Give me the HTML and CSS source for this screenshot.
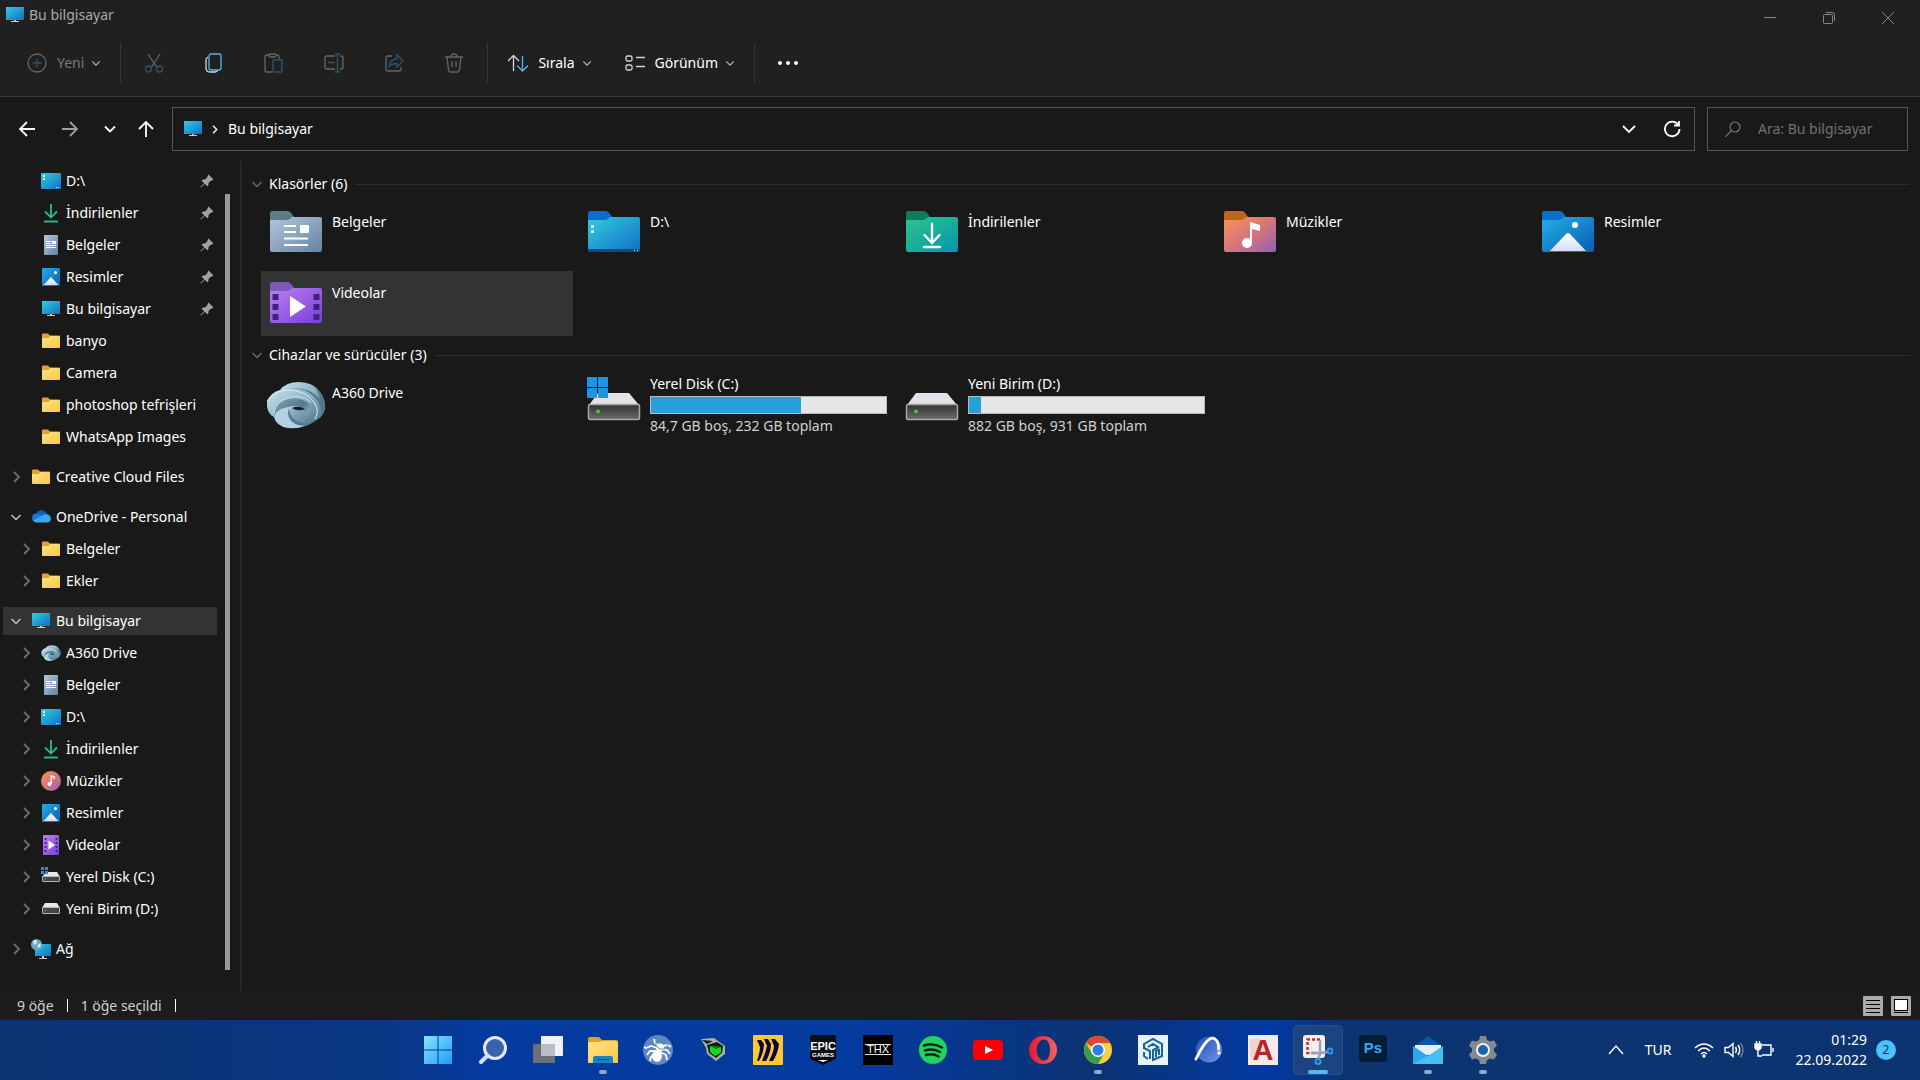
FILE: index.html
```html
<!DOCTYPE html>
<html lang="tr">
<head>
    <meta charset="UTF-8">
    <meta name="viewport" content="width=device-width, initial-scale=1.0">
    <title>Bu bilgisayar</title>
    <link rel="stylesheet" href="styles.css">
</head>
<body>
    <!-- Simgeler -->
    <svg class="sprite" aria-hidden="true">
        <defs>
            <linearGradient id="g-screen" x1="0" y1="0" x2="1" y2="1"><stop offset="0" stop-color="#35cbe0"/><stop offset="1" stop-color="#0f70c4"/></linearGradient>
            <linearGradient id="g-folder" x1="0" y1="0" x2="1" y2="1"><stop offset="0" stop-color="#ffe38d"/><stop offset="1" stop-color="#fbc740"/></linearGradient>
            <linearGradient id="g-doc" x1="0" y1="0" x2="1" y2="1"><stop offset="0" stop-color="#b4c6dc"/><stop offset="1" stop-color="#6484a4"/></linearGradient>
            <linearGradient id="g-down" x1="0" y1="0" x2="1" y2="1"><stop offset="0" stop-color="#2fc58a"/><stop offset="1" stop-color="#0594ad"/></linearGradient>
            <linearGradient id="g-music" x1="0" y1="0" x2="1" y2="1"><stop offset="0" stop-color="#fb9355"/><stop offset=".55" stop-color="#d2737d"/><stop offset="1" stop-color="#8d63bd"/></linearGradient>
            <linearGradient id="g-pic" x1="0" y1="0" x2="1" y2="1"><stop offset="0" stop-color="#25afe8"/><stop offset="1" stop-color="#0a5cb4"/></linearGradient>
            <linearGradient id="g-video" x1="0" y1="0" x2="1" y2="1"><stop offset="0" stop-color="#b883f0"/><stop offset="1" stop-color="#7a3cd8"/></linearGradient>
            <linearGradient id="g-hill" x1="0" y1="0" x2="0" y2="1"><stop offset="0" stop-color="#ffffff"/><stop offset="1" stop-color="#cfdff8"/></linearGradient>
            <linearGradient id="g-disk" x1="0" y1="0" x2="0" y2="1"><stop offset="0" stop-color="#333333"/><stop offset="1" stop-color="#6b6b6b"/></linearGradient>
            <linearGradient id="g-swirl" x1="0" y1="0" x2="1" y2="1"><stop offset="0" stop-color="#d3eff6"/><stop offset=".5" stop-color="#8db4c6"/><stop offset="1" stop-color="#41657a"/></linearGradient>
            <linearGradient id="g-swirl2" x1="0" y1="0" x2="1" y2="1"><stop offset="0" stop-color="#82a5b8"/><stop offset=".5" stop-color="#55788d"/><stop offset="1" stop-color="#b5d6e4"/></linearGradient>
            <linearGradient id="g-win" x1="0" y1="0" x2="1" y2="1"><stop offset="0" stop-color="#8be3fd"/><stop offset="1" stop-color="#1aa0f8"/></linearGradient>
            <linearGradient id="g-opera" x1="0" y1="0" x2="1" y2="0"><stop offset="0" stop-color="#e21b36"/><stop offset="1" stop-color="#f3615f"/></linearGradient>
            <linearGradient id="g-arc" x1="0" y1="0" x2="1" y2="1"><stop offset="0" stop-color="#274fae"/><stop offset="1" stop-color="#6f92ee"/></linearGradient>
        </defs>

        <symbol id="i-pc" viewBox="0 0 20 20"><path d="M1 2h18v13H1z" fill="url(#g-screen)"/><path d="M9 15h2v1h3v1H6v-1h3z" fill="#c3ccd2"/></symbol>
        <symbol id="i-desk" viewBox="0 0 20 20"><rect y="2" width="20" height="16" rx="1" fill="url(#g-screen)"/><path d="M2 4h2v2H2zM2 7h2v2H2zM15 16h1v1h-1zM17 16h1v1h-1z" fill="#d9f8ff"/></symbol>
        <symbol id="i-down" viewBox="0 0 20 20"><path d="M10 1v13M4 8.500l6 6 6-6M3 18.500h14" fill="none" stroke="#2db48a" stroke-width="1.900"/></symbol>
        <symbol id="i-doc" viewBox="0 0 20 20"><rect x="3" width="14" height="20" rx="1" fill="url(#g-doc)"/><path d="M5 6.500h5M5 8.500h5M5 10.500h10M5 12.500h10" stroke="#fff"/><path d="M11 6h4v3h-4z" fill="#fff"/></symbol>
        <symbol id="i-pic" viewBox="0 0 20 20"><rect x="1" y="1" width="18" height="18" rx="1" fill="url(#g-pic)"/><path d="M2.500 18l7.500-8 7.500 8z" fill="url(#g-hill)"/><circle cx="14.500" cy="5.500" r="1.500" fill="#fff"/></symbol>
        <symbol id="i-folder" viewBox="0 0 20 20"><path d="M1 3.500a1 1 0 0 1 1-1h5l2 2h9a1 1 0 0 1 1 1V8H1z" fill="#e0a32c"/><path d="M1 7h6.500L9 5h9a1 1 0 0 1 1 1v10a1 1 0 0 1-1 1H2a1 1 0 0 1-1-1z" fill="url(#g-folder)"/></symbol>
        <symbol id="i-cloud" viewBox="0 0 20 20"><path d="M5 7a6 6 0 0 1 10.500-1L17 11H4z" fill="#0f5fc0"/><path d="M4.500 15a4.300 4.300 0 0 1 .5-8.500q2 0 3.500 1l7 4-5 3.500z" fill="#1577d8"/><path d="M5 15.500q-2-.5-3-2l9-5q1.500-1.500 4-1.500 4.500.5 5 4.500-.5 4-4 4z" fill="#35a9f0"/></symbol>
        <symbol id="i-music" viewBox="0 0 20 20"><circle cx="10" cy="10" r="10" fill="url(#g-music)"/><circle cx="8.500" cy="13" r="2" fill="#fff"/><path d="M10.300 13V5l3 1v2" fill="none" stroke="#fff" stroke-width="1.400"/></symbol>
        <symbol id="i-video" viewBox="0 0 20 20"><rect x="2" width="16" height="20" rx="1" fill="url(#g-video)"/><path d="M7.500 5.500l6.500 4.500-6.500 4.500z" fill="#fff"/><path d="M4.500 3v15M15.500 3v15" stroke="#44207e" stroke-width="1.800" stroke-dasharray="2 2"/></symbol>
        <symbol id="i-disk" viewBox="0 0 20 20"><path d="M4 4h12l3 5H1z" fill="#e6e6e8"/><rect x="1.500" y="8.500" width="17" height="6" rx=".5" fill="#454545" stroke="#b5b5b5"/><circle cx="4.500" cy="11.500" r=".8" fill="#3cd23c"/></symbol>
        <symbol id="i-diskc" viewBox="0 0 20 20"><path d="M5 5h11l3 5H1z" fill="#e6e6e8"/><rect x="1.500" y="9.500" width="17" height="5" rx=".5" fill="#454545" stroke="#b5b5b5"/><circle cx="4.500" cy="12" r=".8" fill="#3cd23c"/><path d="M0 0h3v3H0zM4 0h3v3H4zM0 4h3v3H0zM4 4h3v3H4z" fill="#2a8bcf"/></symbol>
        <symbol id="i-net" viewBox="0 0 20 20"><path d="M4 5h16v12H4z" fill="url(#g-screen)"/><path d="M11 17h2v2h3v1H8v-1h3z" fill="#c3ccd2"/><circle cx="5.500" cy="5.500" r="5.500" fill="#6fa5c4"/><path d="M2 2q3-2 4 0T3 6zM6 7l3-3 1 3-2 2z" fill="#d4ecf5"/></symbol>
        <symbol id="i-swirl" viewBox="0 0 60 48">
            <path d="M14 9Q20 1 33 1q14 0 21 10 6 8 5 17-2 9-12 13-8 6-20 6Q11 47 8 36 0 32 1 21 5 11 14 9z" fill="url(#g-swirl)"/>
            <path d="M17 9q14-4 25 2 9 5 12 14l2 9q3-6 3-10Q57 12 48 5 53 12 54 18 40 3 17 9z" fill="#53768a"/>
            <path d="M8 34Q8 24 19 19q11-4 20 1 7 4 4 10-1 4-6 3 3-6-5-8-12-2-16 8-2 7 2 13-8-3-10-12z" fill="url(#g-swirl2)"/>
            <path d="M8 35q4-9 18-9-6 7-1 14 5 5 14 4-6 4-17 3Q10 45 8 35z" fill="#b2d2e1"/>
            <path d="M23 27q0 10 10 14 7 3 16-1-8 6-17 4-13-6-9-17z" fill="#547b93"/>
            <path d="M26 27q7-3 13 1-7 3-13-1z" fill="#101b22"/>
            <path d="M1 20Q8 9 23 9q17 1 25 12 6 9 1 17" fill="none" stroke="#d9eff6"/>
            <path d="M8 33q1-14 17-17 12-2 20 5" fill="none" stroke="#c4e0ec"/>
        </symbol>

        <!-- Büyük klasörler -->
        <symbol id="f-doc" viewBox="0 0 54 42"><path d="M1 3q0-2 2-2h16q2 0 4 3l2 3v5H1z" fill="#5c7b85"/><path d="M1 10h16q4 0 6-3h28q2 0 2 2v31q0 2-2 2H3q-2 0-2-2z" fill="url(#g-doc)"/><path d="M15 16h12M15 22h12M15 28.500h24M15 35h24" stroke="#fff" stroke-width="2"/><rect x="31" y="15" width="9" height="8" rx="1" fill="#fff"/></symbol>
        <symbol id="f-desk" viewBox="0 0 54 42"><path d="M1 3q0-2 2-2h16q2 0 4 3l2 3v5H1z" fill="#0a6ccc"/><path d="M1 10h16q4 0 6-3h28q2 0 2 2v31q0 2-2 2H3q-2 0-2-2z" fill="url(#g-screen)"/><path d="M1 39h52v1q0 2-2 2H3q-2 0-2-2z" fill="#084d8d"/><path d="M4 15h3v3H4zM4 20h3v3H4zM47 40h1v1h-1zM50 40h1v1h-1z" fill="#c9f8ff"/></symbol>
        <symbol id="f-down" viewBox="0 0 54 42"><path d="M1 3q0-2 2-2h16q2 0 4 3l2 3v5H1z" fill="#0a7d5b"/><path d="M1 10h16q4 0 6-3h28q2 0 2 2v31q0 2-2 2H3q-2 0-2-2z" fill="url(#g-down)"/><path d="M27 14v18M19.500 25l7.500 8 7.500-8M19 37h16" fill="none" stroke="#fff" stroke-width="2.300" stroke-linecap="round"/></symbol>
        <symbol id="f-music" viewBox="0 0 54 42"><path d="M1 3q0-2 2-2h16q2 0 4 3l2 3v5H1z" fill="#bf6518"/><path d="M1 10h16q4 0 6-3h28q2 0 2 2v31q0 2-2 2H3q-2 0-2-2z" fill="url(#g-music)"/><circle cx="24" cy="33" r="5" fill="#fff"/><path d="M27 12l10 3v6l-8-2v14h-2z" fill="#fff"/></symbol>
        <symbol id="f-pic" viewBox="0 0 54 42"><path d="M1 3q0-2 2-2h16q2 0 4 3l2 3v5H1z" fill="#0a6fcf"/><path d="M1 10h16q4 0 6-3h28q2 0 2 2v31q0 2-2 2H3q-2 0-2-2z" fill="url(#g-pic)"/><path d="M9 41l16-17q2-2 4 0l16 17z" fill="url(#g-hill)"/><circle cx="34" cy="15" r="3" fill="#fff"/></symbol>
        <symbol id="f-video" viewBox="0 0 54 42"><path d="M1 3q0-2 2-2h16q2 0 4 3l2 3v5H1z" fill="#8058b8"/><path d="M1 10h16q4 0 6-3h28q2 0 2 2v31q0 2-2 2H3q-2 0-2-2z" fill="url(#g-video)"/><path d="M21 15l16 10.500L21 36z" fill="#fff"/><path d="M6.500 13v27M47.500 13v27" stroke="#44207e" stroke-width="6" stroke-dasharray="6 4"/></symbol>
        <symbol id="f-disk" viewBox="0 0 54 50"><path d="M11 19h31l10 12H2z" fill="#e2e2e8"/><rect x="1.500" y="30.500" width="51" height="15" rx="1.500" fill="url(#g-disk)" stroke="#a8a8a8" stroke-width="1.500"/><circle cx="11" cy="37.500" r="2" fill="#2fd52f"/></symbol>
        <symbol id="f-diskc" viewBox="0 0 54 50"><use href="#f-disk" width="54" height="50"/><path d="M0 3h10v10H0zM11 3h10v10H11zM0 14h10v10H0zM11 14h10v10H11z" fill="#1e95e3"/></symbol>

        <!-- Çizgi simgeler -->
        <symbol id="c-down" viewBox="0 0 12 12"><path d="M1.500 4L6 8.500 10.500 4" fill="none" stroke="currentColor" stroke-width="1.500"/></symbol>
        <symbol id="c-right" viewBox="0 0 12 12"><path d="M4 1l5 5-5 5" fill="none" stroke="currentColor" stroke-width="1.800"/></symbol>
        <symbol id="c-pin" viewBox="0 0 14 14"><path d="M8.500.5l5 5-1.500 1-1 0-2.500 2.500q.5 2-1 3.500L4.800 9.800 1 13.500.5 13l3.700-3.800L1.500 6.500q1.500-1.500 3.500-1L7.500 3V2z" fill="#9aa4ac"/></symbol>
    </svg>

    <div class="window">
        <!-- Başlık çubuğu -->
        <header class="titlebar">
            <svg class="icon18"><use href="#i-pc"/></svg>
            <span class="window-title">Bu bilgisayar</span>
            <div class="window-controls">
                <button type="button" aria-label="Küçült"><svg viewBox="0 0 12 12"><path d="M0 5.500h12"/></svg></button>
                <button type="button" aria-label="Aşağı geri getir"><svg viewBox="0 0 12 12"><rect x=".5" y="2.500" width="9" height="9" rx="1"/><path d="M3 .5h6a2.500 2.500 0 0 1 2.500 2.500v6"/></svg></button>
                <button type="button" aria-label="Kapat"><svg viewBox="0 0 12 12"><path d="M0 0l12 12M12 0L0 12"/></svg></button>
            </div>
        </header>

        <!-- Komut çubuğu -->
        <div class="toolbar">
            <button type="button" class="tool text-tool dim">
                <svg viewBox="0 0 20 20"><circle cx="10" cy="10" r="9"/><path class="blue" d="M10 5.500v9M5.500 10h9"/></svg>
                Yeni
                <svg class="chev"><use href="#c-down"/></svg>
            </button>
            <span class="divider"></span>
            <button type="button" class="tool dim" aria-label="Kes"><svg viewBox="0 0 20 20"><path d="M4 1l8.500 13M16 1L7.500 14"/><circle class="blue" cx="4.500" cy="16" r="3"/><circle class="blue" cx="15.500" cy="16" r="3"/></svg></button>
            <button type="button" class="tool" aria-label="Kopyala"><svg viewBox="0 0 20 20"><path d="M4 4q-2 1-2 3v8q0 4 4 4h5q2 0 3-2"/><rect class="blue" x="5" y="1" width="12" height="16" rx="2"/></svg></button>
            <button type="button" class="tool dim" aria-label="Yapıştır"><svg viewBox="0 0 20 20"><path d="M6 2H3q-2 0-2 2v13q0 2 2 2h5M12 2h1q2 0 2 2v2"/><rect x="5" y="1" width="7" height="3" rx="1.500"/><rect class="blue" x="9" y="7" width="9" height="12" rx="1"/></svg></button>
            <button type="button" class="tool dim" aria-label="Yeniden adlandır"><svg viewBox="0 0 20 20"><path d="M11 3H3Q1 3 1 5v9q0 2 2 2h8M16 3h1q2 0 2 2v9q0 2-2 2h-1"/><path class="blue" d="M4 9.500h7M13.500 1v17M11 1h5M11 19h5"/></svg></button>
            <button type="button" class="tool dim" aria-label="Paylaş"><svg viewBox="0 0 20 20"><path d="M8 3H4Q2 3 2 5v11q0 2 2 2h11q2 0 2-2v-2"/><path class="blue" d="M13 2l6 6-6 6v-3.500q-5 0-8 3 1-7 8-8z"/></svg></button>
            <button type="button" class="tool dim" aria-label="Sil"><svg viewBox="0 0 20 20"><path d="M1 4h18M7 4q0-3 3-3t3 3M3 4l1.500 13q.5 2 2 2h7q1.500 0 2-2L17 4M8 8v6M12 8v6"/></svg></button>
            <span class="divider"></span>
            <button type="button" class="tool text-tool">
                <svg viewBox="0 0 20 20"><path d="M5.500 18V3M0 8l5.500-5.500L11 8"/><path class="blue" d="M14.500 3v15M9 12.500l5.500 5.500 5.500-5.500"/></svg>
                Sırala
                <svg class="chev"><use href="#c-down"/></svg>
            </button>
            <button type="button" class="tool text-tool">
                <svg viewBox="0 0 20 20"><rect x="1" y="3" width="6" height="5" rx="1.500"/><rect x="1" y="12" width="6" height="5" rx="1.500"/><path d="M11 4.500h9M11 13.500h9"/></svg>
                Görünüm
                <svg class="chev"><use href="#c-down"/></svg>
            </button>
            <span class="divider"></span>
            <button type="button" class="tool" aria-label="Daha fazla"><svg viewBox="0 0 20 20"><g fill="#fff" stroke="none"><circle cx="2" cy="10" r="2"/><circle cx="10" cy="10" r="2"/><circle cx="18" cy="10" r="2"/></g></svg></button>
        </div>

        <!-- Adres çubuğu -->
        <div class="navrow">
            <nav class="nav-buttons">
                <button type="button" aria-label="Geri"><svg viewBox="0 0 18 18"><path d="M17 9H2M9 2L2 9l7 7"/></svg></button>
                <button type="button" class="faded" aria-label="İleri"><svg viewBox="0 0 18 18"><path d="M1 9h15M9 2l7 7-7 7"/></svg></button>
                <button type="button" class="narrow" aria-label="Son konumlar"><svg viewBox="0 0 18 18"><path d="M4 6.500l5 5 5-5"/></svg></button>
                <button type="button" class="narrow" aria-label="Yukarı"><svg viewBox="0 0 18 18"><path d="M9 17V2M2 9l7-7 7 7"/></svg></button>
            </nav>
            <div class="address">
                <svg class="icon18"><use href="#i-pc"/></svg>
                <svg class="crumb"><use href="#c-right"/></svg>
                <a href="#">Bu bilgisayar</a>
                <div class="address-buttons">
                    <button type="button" aria-label="Önceki konumlar"><svg viewBox="0 0 18 18"><path d="M3 6l6 6 6-6"/></svg></button>
                    <button type="button" aria-label="Yenile"><svg viewBox="0 0 18 18"><path d="M15 4.500a7.300 7.300 0 1 0 1.500 4.500M16 1v4.500h-5"/></svg></button>
                </div>
            </div>
            <label class="search">
                <svg viewBox="0 0 16 16"><circle cx="10" cy="6" r="5"/><path d="M6.500 9.500L0 16"/></svg>
                <input type="text" placeholder="Ara: Bu bilgisayar" aria-label="Ara">
            </label>
        </div>

        <div class="content">
            <!-- Gezinti bölmesi -->
            <aside class="sidebar">
                <ul class="tree">
                    <li><a href="#" class="row sub"><i class="tw"></i><svg class="ico"><use href="#i-desk"/></svg>D:\<svg class="pin"><use href="#c-pin"/></svg></a></li>
                    <li><a href="#" class="row sub"><i class="tw"></i><svg class="ico"><use href="#i-down"/></svg>İndirilenler<svg class="pin"><use href="#c-pin"/></svg></a></li>
                    <li><a href="#" class="row sub"><i class="tw"></i><svg class="ico"><use href="#i-doc"/></svg>Belgeler<svg class="pin"><use href="#c-pin"/></svg></a></li>
                    <li><a href="#" class="row sub"><i class="tw"></i><svg class="ico"><use href="#i-pic"/></svg>Resimler<svg class="pin"><use href="#c-pin"/></svg></a></li>
                    <li><a href="#" class="row sub"><i class="tw"></i><svg class="ico"><use href="#i-pc"/></svg>Bu bilgisayar<svg class="pin"><use href="#c-pin"/></svg></a></li>
                    <li><a href="#" class="row sub"><i class="tw"></i><svg class="ico"><use href="#i-folder"/></svg>banyo</a></li>
                    <li><a href="#" class="row sub"><i class="tw"></i><svg class="ico"><use href="#i-folder"/></svg>Camera</a></li>
                    <li><a href="#" class="row sub"><i class="tw"></i><svg class="ico"><use href="#i-folder"/></svg>photoshop tefrişleri</a></li>
                    <li><a href="#" class="row sub"><i class="tw"></i><svg class="ico"><use href="#i-folder"/></svg>WhatsApp Images</a></li>
                </ul>
                <ul class="tree">
                    <li><a href="#" class="row"><svg class="tw"><use href="#c-right"/></svg><svg class="ico"><use href="#i-folder"/></svg>Creative Cloud Files</a></li>
                </ul>
                <ul class="tree">
                    <li><a href="#" class="row"><svg class="tw open"><use href="#c-down"/></svg><svg class="ico"><use href="#i-cloud"/></svg>OneDrive - Personal</a></li>
                    <li><a href="#" class="row sub"><svg class="tw"><use href="#c-right"/></svg><svg class="ico"><use href="#i-folder"/></svg>Belgeler</a></li>
                    <li><a href="#" class="row sub"><svg class="tw"><use href="#c-right"/></svg><svg class="ico"><use href="#i-folder"/></svg>Ekler</a></li>
                </ul>
                <ul class="tree">
                    <li><a href="#" class="row selected"><svg class="tw open"><use href="#c-down"/></svg><svg class="ico"><use href="#i-pc"/></svg>Bu bilgisayar</a></li>
                    <li><a href="#" class="row sub"><svg class="tw"><use href="#c-right"/></svg><svg class="ico"><use href="#i-swirl"/></svg>A360 Drive</a></li>
                    <li><a href="#" class="row sub"><svg class="tw"><use href="#c-right"/></svg><svg class="ico"><use href="#i-doc"/></svg>Belgeler</a></li>
                    <li><a href="#" class="row sub"><svg class="tw"><use href="#c-right"/></svg><svg class="ico"><use href="#i-desk"/></svg>D:\</a></li>
                    <li><a href="#" class="row sub"><svg class="tw"><use href="#c-right"/></svg><svg class="ico"><use href="#i-down"/></svg>İndirilenler</a></li>
                    <li><a href="#" class="row sub"><svg class="tw"><use href="#c-right"/></svg><svg class="ico"><use href="#i-music"/></svg>Müzikler</a></li>
                    <li><a href="#" class="row sub"><svg class="tw"><use href="#c-right"/></svg><svg class="ico"><use href="#i-pic"/></svg>Resimler</a></li>
                    <li><a href="#" class="row sub"><svg class="tw"><use href="#c-right"/></svg><svg class="ico"><use href="#i-video"/></svg>Videolar</a></li>
                    <li><a href="#" class="row sub"><svg class="tw"><use href="#c-right"/></svg><svg class="ico"><use href="#i-diskc"/></svg>Yerel Disk (C:)</a></li>
                    <li><a href="#" class="row sub"><svg class="tw"><use href="#c-right"/></svg><svg class="ico"><use href="#i-disk"/></svg>Yeni Birim (D:)</a></li>
                </ul>
                <ul class="tree">
                    <li><a href="#" class="row"><svg class="tw"><use href="#c-right"/></svg><svg class="ico"><use href="#i-net"/></svg>Ağ</a></li>
                </ul>
            </aside>
            <div class="scrollbar"><div class="thumb"></div></div>

            <!-- Dosya listesi -->
            <main class="files">
                <section>
                    <h2><svg><use href="#c-down"/></svg>Klasörler (6)</h2>
                    <div class="grid">
                        <a href="#" class="item"><svg class="big"><use href="#f-doc"/></svg><span>Belgeler</span></a>
                        <a href="#" class="item"><svg class="big"><use href="#f-desk"/></svg><span>D:\</span></a>
                        <a href="#" class="item"><svg class="big"><use href="#f-down"/></svg><span>İndirilenler</span></a>
                        <a href="#" class="item"><svg class="big"><use href="#f-music"/></svg><span>Müzikler</span></a>
                        <a href="#" class="item"><svg class="big"><use href="#f-pic"/></svg><span>Resimler</span></a>
                        <a href="#" class="item selected"><svg class="big"><use href="#f-video"/></svg><span>Videolar</span></a>
                    </div>
                </section>
                <section>
                    <h2><svg><use href="#c-down"/></svg>Cihazlar ve sürücüler (3)</h2>
                    <div class="grid">
                        <a href="#" class="item"><svg class="big swirl"><use href="#i-swirl"/></svg><span>A360 Drive</span></a>
                        <a href="#" class="item drive">
                            <svg class="big"><use href="#f-diskc"/></svg>
                            <div class="drive-info">
                                <span>Yerel Disk (C:)</span>
                                <div class="usage"><div class="used" style="width: 64%"></div></div>
                                <span class="free">84,7 GB boş, 232 GB toplam</span>
                            </div>
                        </a>
                        <a href="#" class="item drive">
                            <svg class="big"><use href="#f-disk"/></svg>
                            <div class="drive-info">
                                <span>Yeni Birim (D:)</span>
                                <div class="usage"><div class="used" style="width: 5%"></div></div>
                                <span class="free">882 GB boş, 931 GB toplam</span>
                            </div>
                        </a>
                    </div>
                </section>
            </main>
        </div>

        <!-- Durum çubuğu -->
        <footer class="statusbar">
            <span class="status">9 öğe</span>
            <span class="status">1 öğe seçildi</span>
            <div class="view-buttons">
                <button type="button" aria-label="Ayrıntılar"><svg viewBox="0 0 20 20"><rect width="20" height="20" rx="1" fill="#aaa"/><path d="M3 4.500h14M3 8.500h14M3 12.500h14M3 16.500h14" stroke="#000"/></svg></button>
                <button type="button" aria-label="Büyük simgeler"><svg viewBox="0 0 20 20"><rect width="20" height="20" rx="1" fill="#aaa"/><rect x="3.500" y="3.500" width="13" height="11" fill="#fff" stroke="#000"/><path d="M3 16.500h14" stroke="#000"/></svg></button>
            </div>
        </footer>
    </div>

    <!-- Görev çubuğu -->
    <div class="taskbar">
        <div class="apps">
            <button type="button" aria-label="Başlat"><svg viewBox="0 0 30 30"><path d="M1 1h13.500v13.500H1zM15.500 1H29v13.500H15.500zM1 15.500h13.500V29H1zM15.500 15.500H29V29H15.500z" fill="url(#g-win)"/></svg></button>
            <button type="button" aria-label="Ara"><svg viewBox="0 0 30 30"><circle cx="17" cy="13" r="10.500" fill="#3b62ae" stroke="#e4e9fb" stroke-width="3"/><path d="M9.500 20.500L3 27" stroke="#d4dcf5" stroke-width="4" stroke-linecap="round"/></svg></button>
            <button type="button" aria-label="Görev görünümü"><svg viewBox="0 0 30 30"><rect x="0" y="9" width="22" height="19" rx="1" fill="#6b6f78"/><rect x="8" y="1" width="22" height="20" rx="1" fill="#eef1f5"/><path d="M8 9h14v12H8z" fill="#b9bdc4"/></svg></button>
            <button type="button" class="running" aria-label="Dosya Gezgini"><svg viewBox="0 0 30 30"><path d="M0 4q0-2 2-2h9l3 3h14q2 0 2 2v3H0z" fill="#e2a21d"/><path d="M0 7h12l2-1h14q2 0 2 2v19q0 1-1 1H1q-1 0-1-1z" fill="url(#g-folder)"/><path d="M5 28v-5q0-2 2-2h16q2 0 2 2v5z" fill="#1787c4"/><path d="M9 24.500h12" stroke="#0b4d86"/></svg></button>
            <button type="button" aria-label="Örümcek"><svg viewBox="0 0 30 30"><circle cx="15" cy="15" r="15" fill="#5f84c8"/><ellipse cx="14" cy="21" rx="5" ry="6" fill="#fff"/><circle cx="17" cy="12.500" r="4" fill="#fff"/><path d="M14 13L8 11 3 13 1 12M13 16l-6 0-3 4M12 18l-4 4-1 4M15 10l-3-2-1-4M19 14l5 1 3 4M17 17l6 3 1 5M20 11l5-1 3 2" fill="none" stroke="#fff" stroke-width="1.800"/><path d="M13 7q2-4 6-4l5 3 1 4-3 4h-5l-4-3z" fill="none" stroke="#4aa868"/></svg></button>
            <button type="button" aria-label="Oyun"><svg viewBox="0 0 30 30"><path d="M3 4l13-1 11 8v8l-9 7-9-7-1-6z" fill="#a8b1ae"/><path d="M4 5l11 1-6 3zM9 10l10-3 6 4-1 7-6 5-7-5z" fill="#10200f"/><path d="M12 11l11 1v6l-6 3-5-4z" fill="#17d81f"/><path d="M12 11l11 1-5 2z" fill="#0b7a14"/></svg></button>
            <button type="button" aria-label="Miro"><svg viewBox="0 0 30 30"><rect width="30" height="30" rx="1" fill="#f9c832"/><path d="M4 5h4l3 4q0 8-5 17H4q3-9 3-14zM11 4h4l3 5q0 8-5 17h-4q4-10 5-15zM18 4h4l4 5q-1 9-6 17h-4q5-10 5-15z" fill="#0c0638"/></svg></button>
            <button type="button" aria-label="Epic Games"><svg viewBox="0 0 30 30"><path d="M2 2q0-2 2-2h22q2 0 2 2v22l-13 6-13-6z" fill="#0a0c14"/><text x="15" y="15" class="logo epic">EPIC</text><text x="15" y="22" class="logo games">GAMES</text><path d="M10 25l5 2 5-2z" fill="#fff"/></svg></button>
            <button type="button" aria-label="THX"><svg viewBox="0 0 30 30"><path d="M0 0h30v30H0z" fill="#000"/><path d="M2 9.500h26M2 19.500h26" stroke="#ddd"/><text x="15" y="18" class="logo thx">THX</text></svg></button>
            <button type="button" aria-label="Spotify"><svg viewBox="0 0 30 30"><circle cx="15" cy="15" r="14" fill="#1ed35e"/><path d="M6 10.500q9-3 18 2M7 15.500q8-2.500 15 1.500M8 20q7-2 12.500 1.500" fill="none" stroke="#06210f" stroke-width="2.400" stroke-linecap="round"/></svg></button>
            <button type="button" aria-label="YouTube"><svg viewBox="0 0 30 30"><rect y="5" width="30" height="20" rx="4" fill="#fb0000"/><path d="M12 11l8 4-8 4z" fill="#fff"/></svg></button>
            <button type="button" aria-label="Opera"><svg viewBox="0 0 30 30"><path fill-rule="evenodd" d="M15 1a14 14 0 1 0 0 28 14 14 0 0 0 0-28zm1 3.500c4 0 6 5 6 10.500s-2 10.500-6 10.500S8.500 20.500 8.500 15s3.500-10.500 7.500-10.500z" fill="url(#g-opera)"/></svg></button>
            <button type="button" class="running" aria-label="Chrome"><svg viewBox="0 0 30 30"><circle cx="15" cy="15" r="14" fill="#f9cd3b"/><path d="M15 15L2.900 8A14 14 0 0 1 27.100 8H15z" fill="#dd4636"/><path d="M2.900 8A14 14 0 0 0 15 29l6.100-10.500L9 18.500z" fill="#349e50"/><circle cx="15" cy="15" r="7" fill="#fff"/><circle cx="15" cy="15" r="5.500" fill="#2e7de9"/></svg></button>
            <button type="button" aria-label="SketchUp"><svg viewBox="0 0 30 30"><path d="M0 0h30v30H0z" fill="#e9f2f8"/><path d="M6 14V9l9-5 9 5v12l-9 4V15l6-3" fill="none" stroke="#13659a" stroke-width="2"/><path d="M10 12l5-3 5 3M6 13l6 3v8M6 17v4l4 3M18 22v-6l3-1v5" fill="none" stroke="#13659a" stroke-width="2"/></svg></button>
            <button type="button" aria-label="Arc"><svg viewBox="0 0 30 30"><circle cx="16" cy="14.500" r="13" fill="url(#g-arc)"/><path d="M3 24Q15-1 22 4q4 3 3.500 10" fill="none" stroke="#fff" stroke-width="2.800" stroke-linecap="round"/><circle cx="26" cy="18" r="1.700" fill="#fff"/></svg></button>
            <button type="button" aria-label="AutoCAD"><svg viewBox="0 0 30 30"><path d="M0 0h30v30H0z" fill="#f6e9e6"/><path d="M2 4h10v20H2z" fill="#efd3cd"/><text x="15" y="25" class="logo acad">A</text></svg></button>
            <button type="button" class="running active" aria-label="Ekran Alıntısı Aracı"><svg viewBox="0 0 30 30"><rect x="0" y="0" width="22" height="23" rx="3" fill="#f2f0f1"/><path d="M17 4.500H4.500V18H14" fill="none" stroke="#c62d1d" stroke-width="2.500" stroke-dasharray="3 2"/><path d="M17 5v14l-2 5M8 18h10l6-1" fill="none" stroke="#9aa5b0" stroke-width="2.500"/><circle cx="15" cy="26.500" r="2.500" fill="none" stroke="#2c9ce8" stroke-width="2"/><circle cx="27" cy="16" r="2.500" fill="none" stroke="#2c9ce8" stroke-width="2"/></svg></button>
            <button type="button" aria-label="Photoshop"><svg viewBox="0 0 30 30"><rect x="1" y="0" width="28" height="27" rx="4" fill="#021d35"/><text x="15" y="18" class="logo ps">Ps</text></svg></button>
            <button type="button" class="running" aria-label="Posta"><svg viewBox="0 0 30 30"><path d="M0 12L15 1l15 11z" fill="#0b56a8"/><path d="M2 10h26v10H2z" fill="#e8eef4"/><path d="M0 11l15 10 15-10v18H0z" fill="#27a9ec"/><path d="M0 29l30-17v17z" fill="#56c9fa" opacity=".7"/></svg></button>
            <button type="button" class="running" aria-label="Ayarlar"><svg viewBox="0 0 30 30"><path d="M12 1h6l1 4 3 1.500 4-1 3 5-3 3v3l3 3-3 5-4-1-3 1.500-1 4h-6l-1-4L8 23.500l-4 1-3-5 3-3v-3l-3-3 3-5 4 1L11 5z" fill="#85898d"/><circle cx="15" cy="15" r="6" fill="#1c62a6" stroke="#f2f2f2" stroke-width="2"/></svg></button>
        </div>
        <div class="tray">
            <button type="button" class="caret" aria-label="Gizli simgeler"><svg viewBox="0 0 16 16"><path d="M1 12l7-8 7 8"/></svg></button>
            <span class="lang">TUR</span>
            <div class="tray-icons">
                <svg viewBox="0 0 20 20"><path d="M1 8q9-8 18 0M4 11q6-6 12 0M7 14q3-3 6 0"/><circle cx="10" cy="16" r="1"/></svg>
                <svg viewBox="0 0 20 20"><path d="M1 7.500h3.500L9 3.500v13l-4.500-4H1zM11.500 7q2 3 0 6M14 5q3.500 5 0 10"/><path d="M16.500 3q5 7 0 14" opacity=".4"/></svg>
                <svg viewBox="0 0 20 20"><path d="M8 5h9v10H8M19 8v4M4 10v6h4"/><path d="M1 4h6v4q-1 2-3 2T1 8zM2.500 1v3M5.500 1v3" fill="#fff"/></svg>
            </div>
            <div class="clock"><span>01:29</span><span>22.09.2022</span></div>
            <span class="badge">2</span>
        </div>
    </div>
</body>
</html>
```
FILE: styles.css
```css
/* Genel */
* {
    box-sizing: border-box;
}

body {
    margin: 0;
    height: 100vh;
    display: flex;
    flex-direction: column;
    background: #191919;
    color: #fff;
    font-family: "Noto Sans", "Open Sans", sans-serif;
    font-size: 14px;
    line-height: 20px;
    overflow: hidden;
}

button {
    display: flex;
    align-items: center;
    justify-content: center;
    margin: 0;
    padding: 0;
    border: none;
    background: none;
    color: inherit;
    font: inherit;
}

a {
    color: inherit;
    text-decoration: none;
}

svg {
    flex: none;
}

.sprite {
    position: absolute;
    width: 0;
    height: 0;
}

.icon18 {
    width: 20px;
    height: 20px;
}

.window {
    flex: 1;
    min-height: 0;
    display: flex;
    flex-direction: column;
}

/* Başlık çubuğu */
.titlebar {
    display: flex;
    align-items: center;
    height: 30px;
    padding: 0 3px 0 5px;
    background: #202020;
}

.window-title {
    margin-left: 4px;
    color: #a9a9a9;
}

.window-controls {
    display: flex;
    margin-left: auto;
    padding-top: 5px;
}

.window-controls button {
    width: 59px;
    height: 25px;
}

.window-controls svg {
    width: 12px;
    height: 12px;
    fill: none;
    stroke: #858585;
}

/* Komut çubuğu */
.toolbar {
    display: flex;
    align-items: center;
    height: 67px;
    padding-left: 10px;
    background: #202020;
    border-bottom: 1px solid #3a3a3a;
}

.tool {
    width: 60px;
    height: 42px;
}

.tool svg {
    width: 20px;
    height: 20px;
    fill: none;
    stroke: #d4d4d4;
    stroke-width: 1.3;
}

.tool .blue {
    stroke: #55b3ea;
}

.text-tool {
    width: auto;
    gap: 10px;
    padding: 0 16px 0 17px;
}

.tool .chev {
    width: 10px;
    height: 10px;
    margin-left: -3px;
    stroke: none;
    color: #b5b5b5;
}

.dim {
    color: #7a7a7a;
}

.dim svg {
    stroke: #666;
}

.dim .blue {
    stroke: #2f5468;
}

.divider {
    width: 1px;
    height: 40px;
    margin: 0 3px;
    background: #363636;
}

/* Adres çubuğu */
.navrow {
    display: flex;
    gap: 12px;
    padding: 10px 12px 10px 6px;
}

.nav-buttons {
    display: flex;
    margin-right: -4px;
}

.nav-buttons button {
    width: 42px;
}

.nav-buttons .faded {
    width: 44px;
}

.nav-buttons .narrow {
    width: 36px;
}

.navrow svg {
    fill: none;
    stroke: #fff;
    stroke-width: 1.8;
}

.nav-buttons svg,
.address-buttons svg {
    width: 18px;
    height: 18px;
}

.nav-buttons .faded svg {
    stroke: #a0a0a0;
}

.address,
.search {
    display: flex;
    align-items: center;
    height: 44px;
    border: 1px solid #555;
}

.address {
    flex: 1;
    padding: 0 1px 0 10px;
}

.address .icon18,
.address .crumb {
    stroke: none;
}

.address .crumb {
    width: 9px;
    height: 9px;
    margin: 0 9px 0 7px;
}

.address-buttons {
    display: flex;
    margin-left: auto;
}

.address-buttons button {
    width: 43px;
    height: 40px;
}

.search {
    width: 201px;
    padding-left: 17px;
    gap: 17px;
}

.search svg {
    width: 16px;
    height: 16px;
    stroke: #777;
    stroke-width: 1.2;
}

.search input {
    width: 140px;
    padding: 0;
    border: none;
    outline: none;
    background: none;
    color: #fff;
    font: inherit;
}

.search input::placeholder {
    color: #727272;
    opacity: 1;
}

/* Gezinti bölmesi */
.content {
    flex: 1;
    min-height: 0;
    display: flex;
}

.sidebar {
    width: 217px;
    padding: 6px 0 0 3px;
    overflow: hidden;
}

.tree {
    display: flex;
    flex-direction: column;
    gap: 4px;
    margin: 0 0 12px;
    padding: 0;
    list-style: none;
}

.row {
    display: flex;
    align-items: center;
    gap: 5px;
    height: 28px;
    padding: 0 3px;
    white-space: nowrap;
}

.row.sub {
    padding-left: 13px;
}

.row.selected {
    background: #333;
}

.tw {
    width: 20px;
    height: 12px;
    color: #6f6f6f;
}

.tw.open {
    color: #c4c4c4;
}

.ico {
    width: 20px;
    height: 20px;
}

.pin {
    width: 14px;
    height: 14px;
    margin-left: auto;
}

.scrollbar {
    width: 25px;
    padding: 33px 10px 21px 8px;
    border-right: 2px solid #272727;
}

.thumb {
    height: 100%;
    background: #9a9a9a;
}

/* Dosya listesi */
.files {
    flex: 1;
    min-width: 0;
    padding: 13px 10px 0 9px;
}

.files h2 {
    display: flex;
    align-items: center;
    gap: 6px;
    margin: 0 0 6px;
    font-size: 14px;
    font-weight: 400;
}

.files h2 svg {
    width: 12px;
    height: 12px;
    color: #6a6a6a;
}

.files h2::after {
    content: "";
    flex: 1;
    height: 1px;
    margin-left: 2px;
    background: #2d2d2d;
}

.grid {
    display: grid;
    grid-template-columns: repeat(auto-fill, 312px);
    gap: 6px;
    padding-left: 10px;
    margin-bottom: 9px;
}

.item {
    display: flex;
    gap: 9px;
    height: 65px;
    padding: 10px 0 0 8px;
}

.item > span {
    margin-top: 2px;
}

.item.selected {
    background: #333;
}

.big {
    width: 54px;
    height: 42px;
}

.swirl {
    width: 60px;
    height: 48px;
    margin: 0 -3px;
}

.item.drive {
    padding-top: 3px;
}

.drive .big {
    height: 50px;
}

.drive-info {
    display: flex;
    flex-direction: column;
    width: 237px;
}

.usage {
    height: 18px;
    margin: 2px 0;
    border: 1px solid #b9b9b9;
    background: #e6e6e6;
}

.used {
    height: 100%;
    background: #26a0da;
}

.free {
    color: #d0d0d0;
}

/* Durum çubuğu */
.statusbar {
    display: flex;
    align-items: center;
    height: 29px;
    padding: 0 9px 0 17px;
    background: #1c1c1c;
    color: #d0d0d0;
}

.status {
    display: flex;
    align-items: center;
    margin-right: 13px;
}

.status::after {
    content: "";
    width: 1px;
    height: 13px;
    margin-left: 13px;
    background: #fff;
}

.view-buttons {
    display: flex;
    gap: 8px;
    margin-left: auto;
}

.view-buttons svg {
    width: 20px;
    height: 20px;
}

/* Görev çubuğu */
.taskbar {
    display: grid;
    grid-template-columns: 1fr auto 1fr;
    align-items: center;
    height: 60px;
    background: linear-gradient(90deg, #0b3470, #0a3784 20%, #053a9e 25%, #053a9e 45%, #0b3372 57%, #0339a3 66%, #0b3470 70%, #0b3470);
}

.apps {
    grid-column: 2;
    display: flex;
    gap: 5px;
    padding-left: 1px;
}

.apps button {
    position: relative;
    width: 50px;
    height: 50px;
    border-radius: 4px;
}

.apps svg {
    width: 30px;
    height: 30px;
}

.apps .active {
    background: #1c4480;
    border: 1px solid #2a4f8a;
}

.apps .running::after {
    content: "";
    position: absolute;
    bottom: 1px;
    width: 8px;
    height: 4px;
    border-radius: 2px;
    background: #92a8cc;
}

.apps .active::after {
    bottom: 0;
    width: 20px;
    background: #55b9f8;
}

.logo {
    fill: #fff;
    text-anchor: middle;
    font-family: "Liberation Sans", sans-serif;
    font-weight: 700;
}

.epic {
    font-family: "Liberation Sans Narrow", "Liberation Sans", sans-serif;
    font-size: 11px;
}

.games {
    font-size: 6px;
}

.thx {
    font-size: 11px;
    font-weight: 400;
}

.acad {
    fill: #bd2027;
    font-size: 29px;
}

.ps {
    fill: #38a6f8;
    font-size: 15px;
}

.tray {
    display: flex;
    align-items: center;
    justify-content: flex-end;
    padding-right: 24px;
}

.tray svg {
    width: 20px;
    height: 20px;
    fill: none;
    stroke: #fff;
    stroke-width: 1.4;
}

.tray .caret svg {
    width: 16px;
    height: 16px;
}

.lang {
    margin: 0 23px 0 21px;
}

.tray-icons {
    display: flex;
    gap: 10px;
}

.clock {
    display: flex;
    flex-direction: column;
    margin: 0 9px 0 21px;
    text-align: right;
}

.badge {
    width: 20px;
    height: 20px;
    border-radius: 50%;
    background: #4cc2ff;
    color: #10355f;
    font-size: 12px;
    text-align: center;
}
```
